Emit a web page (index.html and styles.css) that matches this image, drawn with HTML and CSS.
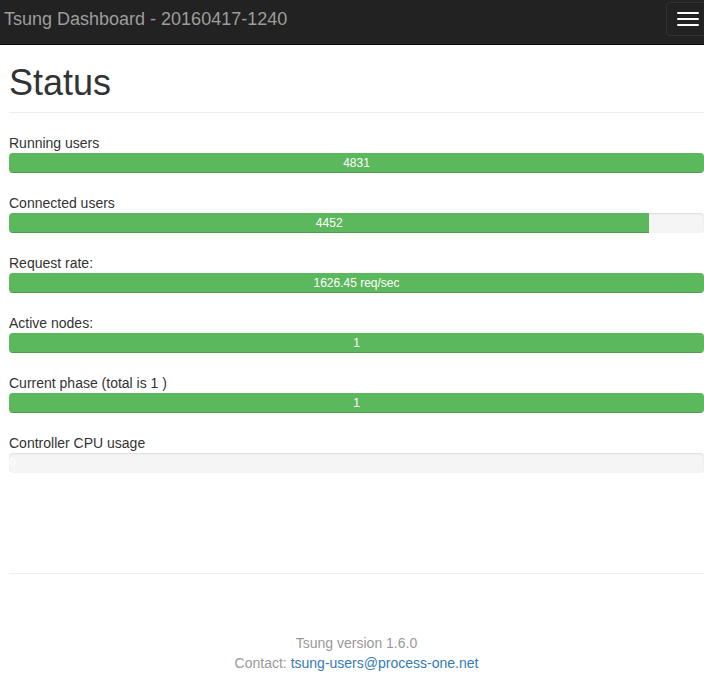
FILE: index.html
```html
<!DOCTYPE html>
<html>
<head>
<meta charset="utf-8">
<title>Tsung Dashboard</title>
<link rel="stylesheet" href="styles.css">
</head>
<body>
<nav class="navbar">
  <span class="brand">Tsung Dashboard - 20160417-1240</span>
  <button class="toggle" type="button" aria-label="Toggle navigation">
    <span class="icon-bar"></span>
    <span class="icon-bar"></span>
    <span class="icon-bar"></span>
  </button>
</nav>
<main class="main">
  <div class="page-header"><h1>Status</h1></div>

  <div class="stat">
    <div class="label">Running users</div>
    <div class="progress"><div class="progress-bar" style="width:100%">4831</div></div>
  </div>
  <div class="stat">
    <div class="label">Connected users</div>
    <div class="progress"><div class="progress-bar" style="width:92.15%">4452</div></div>
  </div>
  <div class="stat">
    <div class="label">Request rate:</div>
    <div class="progress"><div class="progress-bar" style="width:100%">1626.45 req/sec</div></div>
  </div>
  <div class="stat">
    <div class="label">Active nodes:</div>
    <div class="progress"><div class="progress-bar" style="width:100%">1</div></div>
  </div>
  <div class="stat">
    <div class="label">Current phase (total is 1 )</div>
    <div class="progress"><div class="progress-bar" style="width:100%">1</div></div>
  </div>
  <div class="stat">
    <div class="label">Controller CPU usage</div>
    <div class="progress"><div class="progress-bar empty" style="width:0%">0</div></div>
  </div>

  <hr class="rule">
  <footer class="footer">
    <div>Tsung version 1.6.0</div>
    <div>Contact: <a href="#">tsung-users@process-one.net</a></div>
  </footer>
</main>
</body>
</html>
```

FILE: styles.css
```css
html, body {
  margin: 0;
  padding: 0;
  background: #fff;
}
body {
  font-family: "Liberation Sans", Arial, Helvetica, sans-serif;
  font-size: 14px;
  line-height: 20px;
  color: #333;
  overflow-x: hidden;
}
.navbar {
  height: 44px;
  background: #222;
  border-bottom: 1px solid #080808;
  display: flex;
  justify-content: space-between;
  align-items: flex-start;
  overflow: hidden;
}
.brand {
  font-size: 18px;
  line-height: 20px;
  color: #9d9d9d;
  padding: 9px 0 0 4px;
}
.toggle {
  margin: 2px -6px 0 0;
  width: 44px;
  height: 34px;
  padding: 9px 10px;
  background: transparent;
  border: 1px solid #333;
  border-radius: 4px;
  display: flex;
  flex-direction: column;
  gap: 4px;
  box-sizing: border-box;
  flex-shrink: 0;
}
.icon-bar {
  display: block;
  width: 22px;
  height: 2px;
  background: #fff;
  border-radius: 1px;
}
.main {
  padding-left: 9px;
}
.page-header {
  margin: 18px 0 20px;
  padding-bottom: 9px;
  border-bottom: 1px solid #eee;
}
.page-header h1 {
  margin: 0;
  font-size: 36px;
  line-height: 39.6px;
  font-weight: 500;
  color: #333;
}
.label {
  line-height: 20px;
}
.progress {
  height: 20px;
  margin-bottom: 20px;
  background: #f5f5f5;
  border-radius: 4px;
  box-shadow: inset 0 1px 2px rgba(0,0,0,.1);
  overflow: hidden;
}
.progress-bar {
  height: 100%;
  background: #5cb85c;
  color: #fff;
  font-size: 12px;
  line-height: 20px;
  text-align: center;
  box-shadow: inset 0 -1px 0 rgba(0,0,0,.15);
}
.progress-bar.empty {
  box-shadow: none;
  overflow: visible;
  white-space: nowrap;
}
.rule {
  margin: 100px 0 0;
  border: 0;
  border-top: 1px solid #eee;
  height: 0;
}
.footer {
  margin-top: 59px;
  text-align: center;
  color: #999;
}
.footer a {
  color: #337ab7;
  text-decoration: none;
}
```
